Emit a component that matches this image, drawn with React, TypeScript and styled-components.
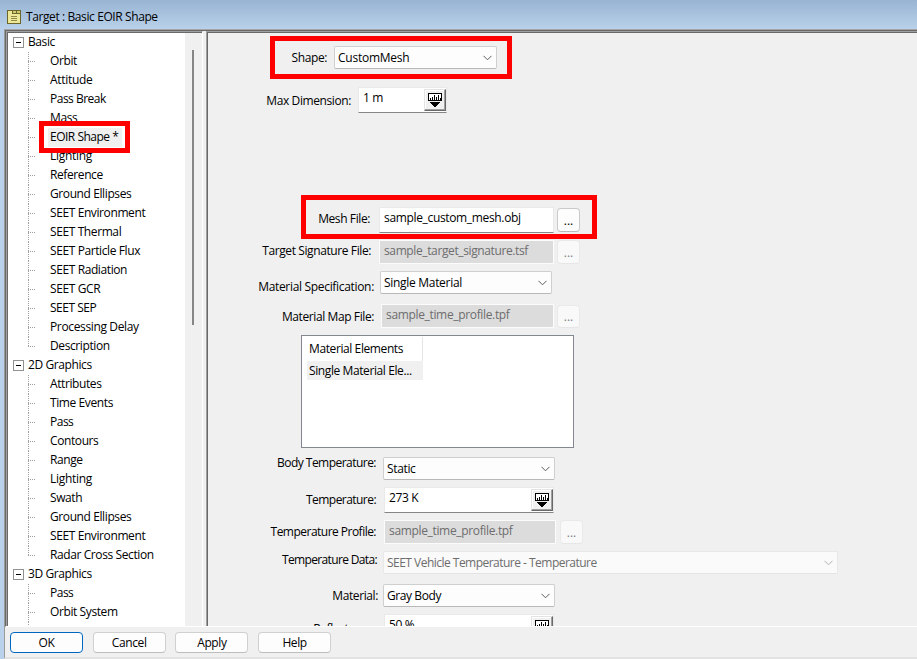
import React from 'react';
import styled, { createGlobalStyle } from 'styled-components';

const GlobalStyle = createGlobalStyle`
  *, *::before, *::after { box-sizing: border-box; }
  html, body { margin: 0; padding: 0; overflow: hidden; }
  body, button {
    font-family: "Open Sans", "Noto Sans", sans-serif;
    font-size: 12px;
    line-height: 16px;
    letter-spacing: -0.4px;
    color: #000;
  }
`;

const Window = styled.div`
  width: 917px;
  height: 659px;
  display: flex;
  flex-direction: column;
  overflow: hidden;
  background: linear-gradient(#98b4d2 0, #b9d1ea 29px, #b9d1ea 100%);
`;

const TitleBar = styled.header`
  flex: 0 0 29px;
  display: flex;
  align-items: center;
  gap: 5px;
  padding: 5px 0 0 7px;
  white-space: pre;
  svg { display: block; }
`;

const Frame = styled.div`
  flex: 1;
  min-height: 0;
  margin-left: 4px;
  display: flex;
  flex-direction: column;
  border-left: 1px solid #9a9a9a;
  border-top: 1px solid #a5a5a5;
  border-bottom: 2px solid #e3e3e3;
  background: #f0f0f0;
`;

const Panes = styled.div`
  flex: 0 0 597px;
  display: flex;
  min-height: 0;
  border-top: 1px solid #696969;
  border-left: 1px solid #696969;
  border-bottom: 1px solid #fff;
`;

const TreePane = styled.nav`
  flex: 0 0 197px;
  display: flex;
  overflow: hidden;
  border-top: 1px solid #a0a0a0;
  border-left: 1px solid #a0a0a0;
  border-right: 1px solid #fff;
  box-shadow: inset 1px 1px 0 #696969;
  padding: 1px 0 0 1px;
`;

const TreeList = styled.ul`
  width: 177px;
  margin: 0;
  padding: 0;
  list-style: none;
  overflow: hidden;
  background: #fff;
`;

const Branch = styled.li`
  display: block;
`;

const BranchHeader = styled.div`
  display: flex;
  align-items: center;
  gap: 4px;
  height: 19px;
  padding-left: 5px;
`;

const BranchName = styled.span`
  height: 19px;
  line-height: 17px;
`;

const Expander = styled.span`
  width: 11px;
  height: 11px;
  display: flex;
  align-items: center;
  justify-content: center;
  border: 1px solid #919191;
  background: #fff;
  &::before {
    content: "";
    width: 5px;
    height: 1px;
    background: #000;
  }
`;

const Leaves = styled.ul`
  margin: 0;
  padding: 0 0 0 20px;
  list-style: none;
`;

const Leaf = styled.li<{ $last?: boolean }>`
  display: flex;
  height: 19px;
  background:
    repeating-linear-gradient(180deg, #a0a0a0 0 1px, transparent 1px 2px) 0 0 / 1px ${p => (p.$last ? '10px' : '100%')} no-repeat,
    repeating-linear-gradient(90deg, #a0a0a0 0 1px, transparent 1px 2px) 0 9px / 8px 1px no-repeat;
  padding-left: 20px;
`;

const LeafText = styled.span<{ $selected?: boolean; $track?: number }>`
  height: 19px;
  padding: 0 4px 0 2px;
  line-height: 17px;
  white-space: pre;
  letter-spacing: ${p => p.$track ?? -0.4}px;
  background: ${p => (p.$selected ? '#f0f0f0' : 'transparent')};
`;

const ScrollTrack = styled.div`
  width: 17px;
  padding: 17px 0 0 7px;
  background: #f0f0f0;
`;

const ScrollThumb = styled.div`
  width: 2px;
  height: 275px;
  background: #858585;
`;

const FormPane = styled.main`
  flex: 1;
  margin-left: 3px;
  overflow: hidden;
  border-top: 1px solid #a0a0a0;
  border-left: 1px solid #a0a0a0;
  box-shadow: inset 1px 1px 0 #696969;
  padding-top: 2px;
`;

/* Each row keeps its own pitch, since the property groups are spaced unevenly. */
const FormRow = styled.div<{ $gap: number; $h: number; $label: number; $space: number }>`
  display: grid;
  grid-template-columns: ${p => p.$label}px auto;
  column-gap: ${p => p.$space}px;
  justify-content: start;
  align-items: start;
  height: ${p => p.$h}px;
  margin-top: ${p => p.$gap}px;
`;

const Label = styled.label<{ $drop: number; $track?: number }>`
  margin-top: ${p => p.$drop}px;
  text-align: right;
  white-space: pre;
  letter-spacing: ${p => p.$track ?? -0.4}px;
`;

const Controls = styled.div<{ $gap?: number }>`
  display: flex;
  align-items: center;
  gap: ${p => p.$gap ?? 3}px;
`;

const SelectBox = styled.div<{ $w: number; $disabled?: boolean; $track?: number }>`
  width: ${p => p.$w}px;
  height: 23px;
  display: flex;
  align-items: center;
  justify-content: space-between;
  padding: 0 4px 0 3px;
  border: 1px solid ${p => (p.$disabled ? '#e8e8e8' : '#cfcfcf')};
  border-bottom-color: ${p => (p.$disabled ? '#e4e4e4' : '#b8b8b8')};
  border-radius: 2px;
  background: ${p => (p.$disabled ? '#fafafa' : '#fdfdfd')};
  color: ${p => (p.$disabled ? '#6d6d6d' : '#000')};
  letter-spacing: ${p => p.$track ?? -0.35}px;
  white-space: pre;
`;

const TextField = styled.div<{ $w: number }>`
  width: ${p => p.$w}px;
  height: 26px;
  display: flex;
  justify-content: space-between;
  padding: 2px 0 0 4px;
  border: 1px solid #e9e9e9;
  border-bottom: 1px solid #858585;
  background: #fff;
  letter-spacing: -0.34px;
  white-space: pre;
`;

const UnitField = styled(TextField)`
  padding: 1px 0 0 4px;
  & > span:first-child { padding-top: 1px; }
`;

const ReadOnlyField = styled.div<{ $w: number; $track?: number }>`
  width: ${p => p.$w}px;
  height: 24px;
  padding: 2px 0 0 4px;
  border: 1px solid #fcfcfc;
  background: #dcdcdc;
  color: #6d6d6d;
  letter-spacing: ${p => p.$track ?? -0.34}px;
  white-space: pre;
`;

const UnitButton = styled.span`
  width: 22px;
  height: 22px;
  display: flex;
  align-items: center;
  justify-content: center;
  border: 1px solid #e3e3e3;
  border-right: 1px solid #696969;
  border-bottom: 1px solid #696969;
  box-shadow: inset -1px -1px 0 #a0a0a0, inset 1px 1px 0 #fff;
  background: #f0f0f0;
`;

const BrowseButton = styled.button<{ $muted?: boolean; $h?: number }>`
  width: 23px;
  height: ${p => p.$h ?? 24}px;
  padding: 2px 0 0;
  border: 1px solid ${p => (p.$muted ? '#e9e9e9' : '#cacaca')};
  border-bottom-color: ${p => (p.$muted ? '#e6e6e6' : '#bababa')};
  border-radius: 4px;
  background: ${p => (p.$muted ? '#f9f9f9' : '#fdfdfd')};
  color: ${p => (p.$muted ? '#7d7d7d' : '#000')};
  letter-spacing: 0;
`;

const ElementList = styled.section`
  width: 273px;
  height: 113px;
  margin: 7px 0 0 94px;
  padding: 1px 0 0 5px;
  border: 1px solid #828790;
  background: #fff;
`;

const ElementHeader = styled.div`
  width: 116px;
  height: 24px;
  padding: 4px 0 0 2px;
  border-right: 1px solid #e5e5e5;
`;

const ElementRow = styled.div`
  width: 116px;
  height: 19px;
  padding: 2px 0 0 2px;
  background: #f0f0f0;
`;

const Footer = styled.footer`
  display: flex;
  gap: 9.7px;
  padding: 5px 0 0 5px;
`;

const DialogButton = styled.button<{ $primary?: boolean }>`
  width: 73px;
  height: 21px;
  padding: 0;
  border: 1px solid ${p => (p.$primary ? '#0067c0' : '#d0d0d0')};
  border-bottom-color: ${p => (p.$primary ? '#0067c0' : '#bdbdbd')};
  border-radius: 4px;
  background: #fdfdfd;
`;

const Callout = styled.div<{ $x: number; $y: number; $w: number; $h: number }>`
  position: absolute;
  left: ${p => p.$x}px;
  top: ${p => p.$y}px;
  width: ${p => p.$w}px;
  height: ${p => p.$h}px;
  border: 5px solid #fe0000;
  pointer-events: none;
`;

const WindowIcon = () => (
  <svg width="14" height="14" viewBox="0 0 14 14" shapeRendering="crispEdges">
    <path d="M0 0h14v14H0z" fill="#6b662c" />
    <path d="M1 4h12v9H1z" fill="#ece898" />
    <path d="M1 1h4v3H1z" fill="#ece898" />
    <path d="M6 1h3v2H6zM10 1h3v2h-3z" fill="#d2cc70" />
    <path d="M4 6h6v1H4zM4 8h6v1H4zM4 10h6v1H4z" fill="#8f8a48" />
  </svg>
);

const Chevron = ({ muted = false }: { muted?: boolean }) => (
  <svg width="9" height="6" viewBox="0 0 9 6" fill="none" stroke={muted ? '#b0b0b0' : '#5c5c5c'}>
    <path d="M0.5 0.8 4.5 4.8 8.5 0.8" />
  </svg>
);

const UnitIcon = () => (
  <svg width="14" height="15" viewBox="0 0 14 15" shapeRendering="crispEdges">
    <path d="M0 0h14v8H0z" />
    <path d="M1 1h12v6H1z" fill="#fff" />
    <path d="M2 5h1v2H2zM4 4h1v3H4zM6 2h1v5H6zM8 4h1v3H8zM10 2h1v5h-1zM12 5h1v2h-1z" />
    <path d="M2 9h10v1H2zM3 10h8v1H3zM4 11h6v1H4zM5 12h4v1H5zM6 13h2v1H6z" />
  </svg>
);

type Item = { name: string; selected?: boolean; track?: number };

const tree: { name: string; open?: boolean; items: Item[] }[] = [
  {
    name: 'Basic',
    items: [
      { name: 'Orbit' },
      { name: 'Attitude', track: -0.3 },
      { name: 'Pass Break', track: -0.5 },
      { name: 'Mass' },
      { name: 'EOIR Shape *', selected: true, track: -0.5 },
      { name: 'Lighting', track: -0.3 },
      { name: 'Reference' },
      { name: 'Ground Ellipses' },
      { name: 'SEET Environment' },
      { name: 'SEET Thermal' },
      { name: 'SEET Particle Flux' },
      { name: 'SEET Radiation' },
      { name: 'SEET GCR' },
      { name: 'SEET SEP', track: -0.5 },
      { name: 'Processing Delay', track: -0.36 },
      { name: 'Description' },
    ],
  },
  {
    name: '2D Graphics',
    items: [
      { name: 'Attributes' },
      { name: 'Time Events' },
      { name: 'Pass', track: -0.5 },
      { name: 'Contours' },
      { name: 'Range' },
      { name: 'Lighting', track: -0.3 },
      { name: 'Swath' },
      { name: 'Ground Ellipses' },
      { name: 'SEET Environment' },
      { name: 'Radar Cross Section' },
    ],
  },
  {
    name: '3D Graphics',
    open: true,
    items: [{ name: 'Pass', track: -0.5 }, { name: 'Orbit System' }, { name: '' }],
  },
];

const Select = ({ w, value, disabled, track }: { w: number; value: string; disabled?: boolean; track?: number }) => (
  <SelectBox $w={w} $disabled={disabled} $track={track}>
    {value}
    <Chevron muted={disabled} />
  </SelectBox>
);

const Unit = ({ w, value }: { w: number; value: string }) => (
  <UnitField $w={w}>
    <span>{value}</span>
    <UnitButton>
      <UnitIcon />
    </UnitButton>
  </UnitField>
);

export default function App() {
  return (
    <>
      <GlobalStyle />
      <Window>
        <TitleBar>
          <WindowIcon />
          Target : Basic EOIR Shape
        </TitleBar>
        <Frame>
          <Panes>
            <TreePane>
              <TreeList>
                {tree.map(branch => (
                  <Branch key={branch.name}>
                    <BranchHeader>
                      <Expander />
                      <BranchName>{branch.name}</BranchName>
                    </BranchHeader>
                    <Leaves>
                      {branch.items.map((item, i) => (
                        <Leaf key={item.name} $last={!branch.open && i === branch.items.length - 1}>
                          <LeafText $selected={item.selected} $track={item.track}>
                            {item.name}
                          </LeafText>
                        </Leaf>
                      ))}
                    </Leaves>
                  </Branch>
                ))}
              </TreeList>
              <ScrollTrack>
                <ScrollThumb />
              </ScrollTrack>
            </TreePane>
            <FormPane>
              <FormRow $gap={12} $h={23} $label={120} $space={7}>
                <Label $drop={4}>Shape:</Label>
                <Select w={163} value="CustomMesh" track={-0.25} />
              </FormRow>
              <FormRow $gap={18} $h={26} $label={144} $space={7}>
                <Label $drop={6}>Max Dimension:</Label>
                <Unit w={89} value="1 m" />
              </FormRow>
              <FormRow $gap={94} $h={26} $label={163} $space={9}>
                <Label $drop={4}>Mesh File:</Label>
                <Controls>
                  <TextField $w={175}>sample_custom_mesh.obj</TextField>
                  <BrowseButton>...</BrowseButton>
                </Controls>
              </FormRow>
              <FormRow $gap={7} $h={24} $label={164} $space={8}>
                <Label $drop={3}>Target Signature File:</Label>
                <Controls>
                  <ReadOnlyField $w={175} $track={-0.38}>sample_target_signature.tsf</ReadOnlyField>
                  <BrowseButton $muted>...</BrowseButton>
                </Controls>
              </FormRow>
              <FormRow $gap={7} $h={23} $label={167} $space={6}>
                <Label $drop={8} $track={-0.32}>Material Specification:</Label>
                <Select w={172} value="Single Material" track={-0.3} />
              </FormRow>
              <FormRow $gap={10} $h={24} $label={167} $space={7}>
                <Label $drop={5}>Material Map File:</Label>
                <Controls>
                  <ReadOnlyField $w={173}>sample_time_profile.tpf</ReadOnlyField>
                  <BrowseButton $muted $h={23}>...</BrowseButton>
                </Controls>
              </FormRow>
              <ElementList>
                <ElementHeader>Material Elements</ElementHeader>
                <ElementRow>Single Material Ele...</ElementRow>
              </ElementList>
              <FormRow $gap={9} $h={23} $label={169} $space={7}>
                <Label $drop={-2} $track={-0.53}>Body Temperature:</Label>
                <Select w={172} value="Static" />
              </FormRow>
              <FormRow $gap={7} $h={26} $label={169} $space={8}>
                <Label $drop={5} $track={-0.55}>Temperature:</Label>
                <Unit w={170} value="273 K" />
              </FormRow>
              <FormRow $gap={7} $h={24} $label={169} $space={8}>
                <Label $drop={4} $track={-0.52}>Temperature Profile:</Label>
                <Controls $gap={4}>
                  <ReadOnlyField $w={172}>sample_time_profile.tpf</ReadOnlyField>
                  <BrowseButton $muted>...</BrowseButton>
                </Controls>
              </FormRow>
              <FormRow $gap={7} $h={23} $label={170} $space={6}>
                <Label $drop={1} $track={-0.65}>Temperature Data:</Label>
                <Select w={455} value="SEET Vehicle Temperature - Temperature" disabled track={-0.52} />
              </FormRow>
              <FormRow $gap={10} $h={23} $label={171} $space={5}>
                <Label $drop={4}>Material:</Label>
                <Select w={172} value="Gray Body" track={-0.42} />
              </FormRow>
              <FormRow $gap={7} $h={26} $label={169} $space={8}>
                <Label $drop={7}>Reflectance:</Label>
                <Unit w={170} value="50 %" />
              </FormRow>
            </FormPane>
          </Panes>
          <Footer>
            <DialogButton $primary>OK</DialogButton>
            <DialogButton>Cancel</DialogButton>
            <DialogButton>Apply</DialogButton>
            <DialogButton>Help</DialogButton>
          </Footer>
        </Frame>
      </Window>
      <Callout $x={39} $y={121} $w={91} $h={32} />
      <Callout $x={270} $y={36} $w={242} $h={43} />
      <Callout $x={301} $y={195} $w={296} $h={44} />
    </>
  );
}
